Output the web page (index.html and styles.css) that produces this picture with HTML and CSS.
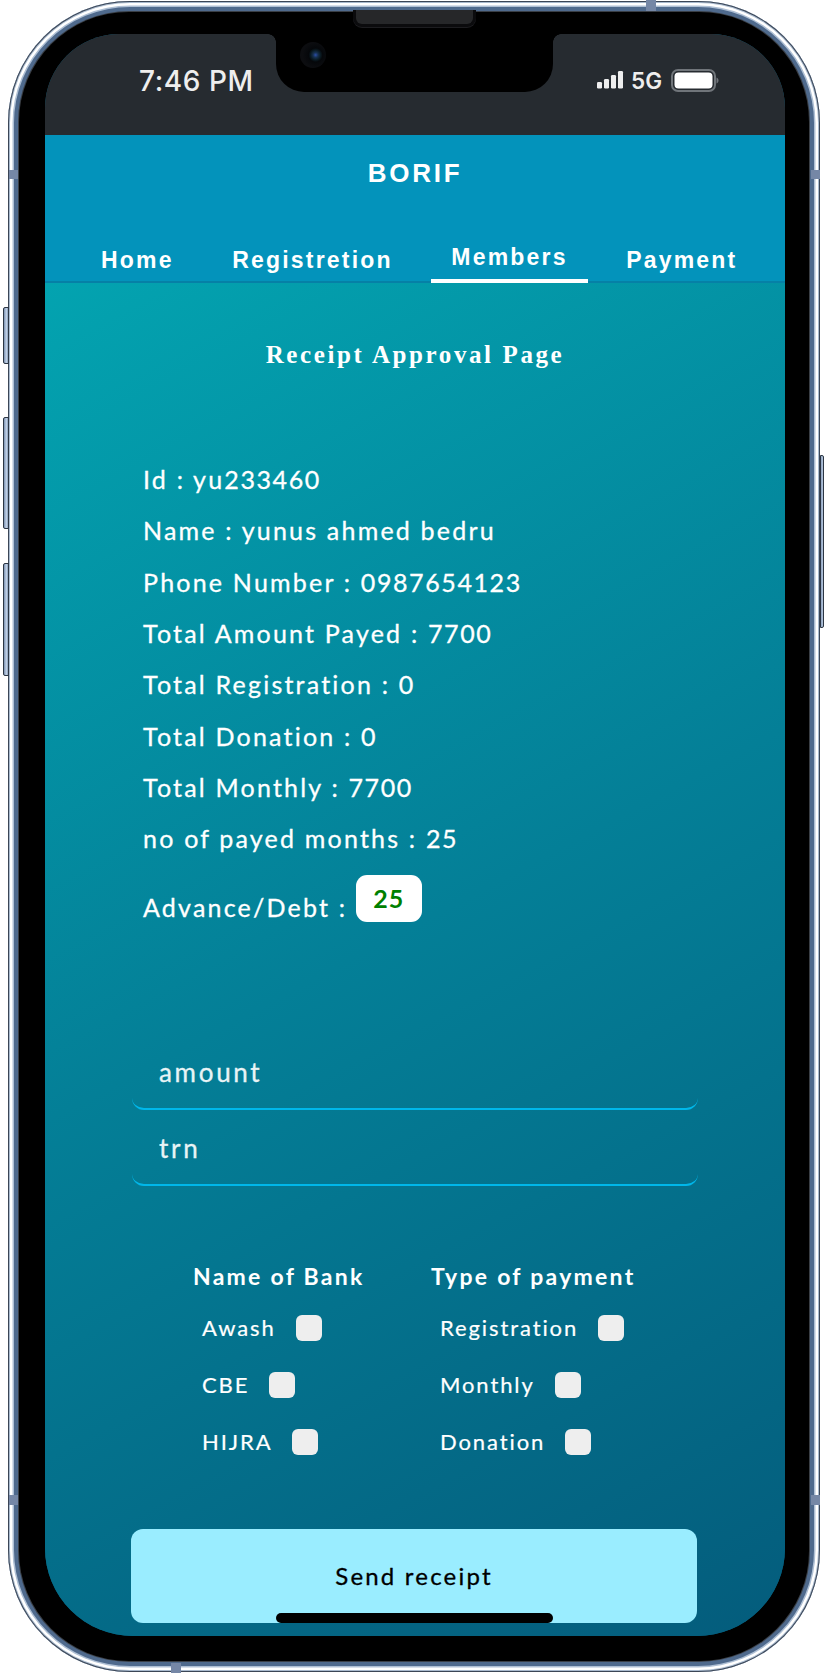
FILE: index.html
```html
<!DOCTYPE html>
<html lang="en">
<head>
<meta charset="utf-8">
<title>BORIF</title>
<link rel="stylesheet" href="styles.css">
</head>
<body>
<div class="phone">
  <span class="side side-silent"></span>
  <span class="side side-up"></span>
  <span class="side side-down"></span>
  <span class="side side-power"></span>
  <span class="band band-top"></span>
  <span class="band band-left"></span>
  <span class="band band-right"></span>
  <span class="band band-left2"></span>
  <span class="band band-right2"></span>
  <span class="band band-bottom"></span>
  <div class="device">
    <div class="bezel">
      <span class="speaker"></span>
      <div class="screen">
        <div class="statusbar">
          <div class="time-cell"><span class="time">7:46 PM</span></div>
          <div class="notch">
            <span class="camera"></span>
          </div>
          <div class="status-icons">
            <svg class="signal" width="27" height="18" viewBox="0 0 27 18"><rect x="0" y="11" width="5" height="6.5" rx="1.2"/><rect x="7" y="8" width="5" height="9.5" rx="1.2"/><rect x="14" y="4" width="5" height="13.5" rx="1.2"/><rect x="21" y="0" width="5" height="17.5" rx="1.2"/></svg>
            <span class="net">5G</span>
            <svg class="battery" width="48" height="23" viewBox="0 0 48 23"><rect x="1" y="1" width="43" height="21" rx="6" fill="none" stroke="#70757a" stroke-width="2"/><rect x="3.5" y="3.5" width="38" height="16" rx="4" fill="#fff"/><path d="M45.5 8.5c1.4.6 2 1.6 2 3s-.6 2.400-2 3z" fill="#70757a"/></svg>
          </div>
        </div>
        <header class="appbar">
          <h1 class="brand">BORIF</h1>
          <nav class="tabs">
            <a class="tab">Home</a>
            <a class="tab">Registretion</a>
            <a class="tab tab-active">Members</a>
            <a class="tab">Payment</a>
          </nav>
        </header>
        <main class="content">
          <h2 class="page-title">Receipt Approval Page</h2>
          <div class="info">
            <p class="info-row">Id : yu<span class="num">233460</span></p>
            <p class="info-row">Name : yunus ahmed bedru</p>
            <p class="info-row">Phone Number : <span class="num">0987654123</span></p>
            <p class="info-row">Total Amount Payed : <span class="num">7700</span></p>
            <p class="info-row">Total Registration : 0</p>
            <p class="info-row">Total Donation : 0</p>
            <p class="info-row">Total Monthly : <span class="num">7700</span></p>
            <p class="info-row">no of payed months : <span class="num">25</span></p>
            <div class="debt-row">
              <span class="debt-label">Advance/Debt :</span>
              <span class="debt-badge">25</span>
            </div>
          </div>
          <div class="fields">
            <input class="field" type="text" placeholder="amount">
            <input class="field" type="text" placeholder="trn">
          </div>
          <div class="choices">
            <div class="choice-col choice-bank">
              <h3 class="choice-title">Name of Bank</h3>
              <label class="choice">Awash <input class="check" type="checkbox"></label>
              <label class="choice">CBE <input class="check" type="checkbox"></label>
              <label class="choice">HIJRA <input class="check" type="checkbox"></label>
            </div>
            <div class="choice-col">
              <h3 class="choice-title">Type of payment</h3>
              <label class="choice">Registration <input class="check" type="checkbox"></label>
              <label class="choice">Monthly <input class="check" type="checkbox"></label>
              <label class="choice">Donation <input class="check" type="checkbox"></label>
            </div>
          </div>
          <button class="send" type="button">Send receipt</button>
        </main>
        <span class="home-indicator"></span>
      </div>
    </div>
  </div>
</div>
</body>
</html>
```
FILE: styles.css
```css
* { box-sizing: border-box; }
html, body { margin: 0; padding: 0; background: #fff; }
body { width: 824px; height: 1673px; overflow: hidden; font-family: "Lato", "Liberation Sans", sans-serif; }

.phone { position: relative; width: 824px; height: 1673px; padding: 1px 4px 0 8px; }

.device {
  width: 812px;
  height: 1671px;
  padding: 11px;
  border-radius: 122px;
  background: #4f6a8d;
  box-shadow: inset 0 0 0 1px #3b4656, inset 0 0 0 2px #a9bace, inset 0 0 0 4.500px #fff, inset 0 0 0 6px #aebfd4;
}
.bezel {
  position: relative;
  width: 790px;
  height: 1649px;
  padding: 22px 24px 25px 26px;
  border-radius: 110px;
  background: #000;
  box-shadow: 0 0 0 1px #3a3f46;
}
.speaker {
  position: absolute;
  left: 334px;
  top: -2px;
  width: 123px;
  height: 17px;
  border-radius: 0 0 9px 9px;
  border: 3px solid #0b0b0d;
  border-top: 0;
  background: #262729;
  box-shadow: 0 1px 0 #1d1d20;
}

.side { position: absolute; z-index: 2; background: linear-gradient(90deg, #7c93b3, #c3d2e6 60%, #8aa0bd); border: 1px solid #2c3644; }
.side-silent { left: 3px; top: 307px; width: 6px; height: 57px; border-radius: 2px 0 0 2px; }
.side-up { left: 3px; top: 417px; width: 6px; height: 112px; border-radius: 2px 0 0 2px; }
.side-down { left: 3px; top: 563px; width: 6px; height: 113px; border-radius: 2px 0 0 2px; }
.side-power { left: 820px; top: 455px; width: 4px; height: 173px; border-radius: 0 2px 2px 0; }

.band { position: absolute; z-index: 2; background: #7587a6; }
.band-top { left: 646px; top: 0; width: 10px; height: 11px; }
.band-left { left: 9px; top: 170px; width: 9px; height: 9px; }
.band-right { left: 811px; top: 170px; width: 9px; height: 9px; }
.band-left2 { left: 9px; top: 1495px; width: 9px; height: 10px; }
.band-right2 { left: 811px; top: 1495px; width: 9px; height: 10px; }
.band-bottom { left: 171px; top: 1663px; width: 10px; height: 10px; }

.screen {
  position: relative;
  width: 740px;
  height: 1602px;
  overflow: hidden;
  border-radius: 74px 74px 88px 88px;
  display: flex;
  flex-direction: column;
  background: #045c7c;
}

.statusbar { display: flex; height: 101px; background: #262b30; flex: none; }
.time-cell { width: 231px; padding: 31px 0 0 94px; }
.time { font-family: "Inter", "Liberation Sans", sans-serif; font-size: 28px; font-weight: 500; line-height: 32px; letter-spacing: 0.6px; color: #eeeeee; white-space: nowrap; }
.notch { position: relative; width: 277px; height: 58px; background: #000; border-radius: 0 0 28px 28px; }
.notch::before, .notch::after { content: ""; position: absolute; top: 0; width: 8px; height: 8px; }
.notch::before { left: -8px; background: radial-gradient(circle at 0 100%, #262b30 7.500px, #000 8px); }
.notch::after { right: -8px; background: radial-gradient(circle at 100% 100%, #262b30 7.500px, #000 8px); }
.camera {
  position: absolute;
  left: 24px;
  top: 8px;
  width: 26px;
  height: 26px;
  border-radius: 50%;
  background: radial-gradient(circle at 60% 50%, #2b4ea8 0, #16304f 2.500px, #0a1a22 5px, #05070a 7px, #0c0d10 13px);
}
.status-icons { width: 232px; padding: 35px 0 0 44px; display: flex; align-items: flex-start; }
.signal { fill: #eeeeee; margin: 2px 7px 0 0; flex: none; }
.net { font-family: "Inter", "Liberation Sans", sans-serif; font-size: 22.500px; font-weight: 600; line-height: 21px; margin: 1px 9px 0 0; color: #eeeeee; }
.battery { flex: none; }

.appbar { flex: none; height: 148px; background: #0393bb; box-shadow: inset 0 -2px 0 #0680a6; display: flex; flex-direction: column; }
.brand { margin: 22px 0 0; text-align: center; font-family: "Liberation Sans", sans-serif; font-size: 26px; font-weight: 700; line-height: 32px; letter-spacing: 2.750px; color: #fff; }
.tabs { margin-top: auto; display: flex; align-items: flex-end; gap: 18.500px; padding-left: 36px; }
.tab { padding: 0 20px 9px; font-family: "Liberation Sans", sans-serif; font-size: 23px; font-weight: 700; line-height: 28px; letter-spacing: 2.200px; color: #fff; white-space: nowrap; }
.tab-active { padding-bottom: 8px; border-bottom: 4px solid #fff; }

.content {
  flex: 1;
  padding-top: 57px;
  background: linear-gradient(152deg, #03a3b0 0%, #047f97 48%, #045c7c 100%);
}
.page-title { margin: 0; text-align: center; font-family: "Liberation Serif", serif; font-size: 25px; font-weight: 700; line-height: 30px; letter-spacing: 2.600px; color: #fff; }

.info { margin: 84px 0 0 98px; color: #fff; font-size: 25px; letter-spacing: 2.200px; -webkit-text-stroke: 0.3px #fff; }
.info-row { margin: 0; height: 51.330px; line-height: 51.330px; white-space: nowrap; }
.num { letter-spacing: 1.600px; }
.debt-row { display: flex; align-items: flex-end; margin-top: 10px; gap: 9px; height: 47px; }
.debt-label { line-height: 28px; margin-bottom: 1px; }
.debt-badge { width: 66px; height: 47px; padding-left: 17px; border-radius: 11px; background: #fff; color: #008000; font-weight: 700; font-size: 25px; line-height: 47px; letter-spacing: 1px; -webkit-text-stroke: 0; }

.fields { margin: 116px 0 0 87px; width: 566px; display: flex; flex-direction: column; gap: 4px; }
.field {
  display: block;
  width: 100%;
  height: 72px;
  padding: 0 0 2px 27px;
  border: 0;
  border-bottom: 2px solid #00b7ea;
  border-radius: 12px;
  background: transparent;
  outline: none;
  font-family: "Lato", "Liberation Sans", sans-serif;
  font-size: 26px;
  letter-spacing: 2.700px;
  -webkit-text-stroke: 0.3px #e9f4f6;
  color: #fff;
}
.field::placeholder { color: #e9f4f6; opacity: 1; }

.choices { margin: 75px 0 0 148px; display: flex; color: #fff; }
.choice-col { display: flex; flex-direction: column; align-items: flex-start; }
.choice-bank { width: 238px; }
.choice-title { margin: 0 0 24px; font-size: 23px; font-weight: 700; line-height: 30px; letter-spacing: 2.250px; white-space: nowrap; }
.choice { display: flex; align-items: center; gap: 20px; height: 26px; margin: 0 0 31px 9px; font-size: 22px; letter-spacing: 1.900px; white-space: nowrap; -webkit-text-stroke: 0.2px #fff; }
.check { appearance: none; -webkit-appearance: none; display: block; margin: 0; width: 26px; height: 26px; border-radius: 6px; background: #eeeeee; }

.send {
  display: block;
  margin: 43px 0 0 86px;
  width: 566px;
  height: 94px;
  padding: 0 0 1px;
  border: 0;
  border-radius: 12px;
  background: #9aedff;
  color: #000;
  font-family: "Lato", "Liberation Sans", sans-serif;
  font-size: 24px;
  letter-spacing: 2.200px;
  -webkit-text-stroke: 0.3px #000;
}
.home-indicator { position: absolute; left: 231px; bottom: 13px; width: 277px; height: 10px; border-radius: 5px; background: #000; }
```
